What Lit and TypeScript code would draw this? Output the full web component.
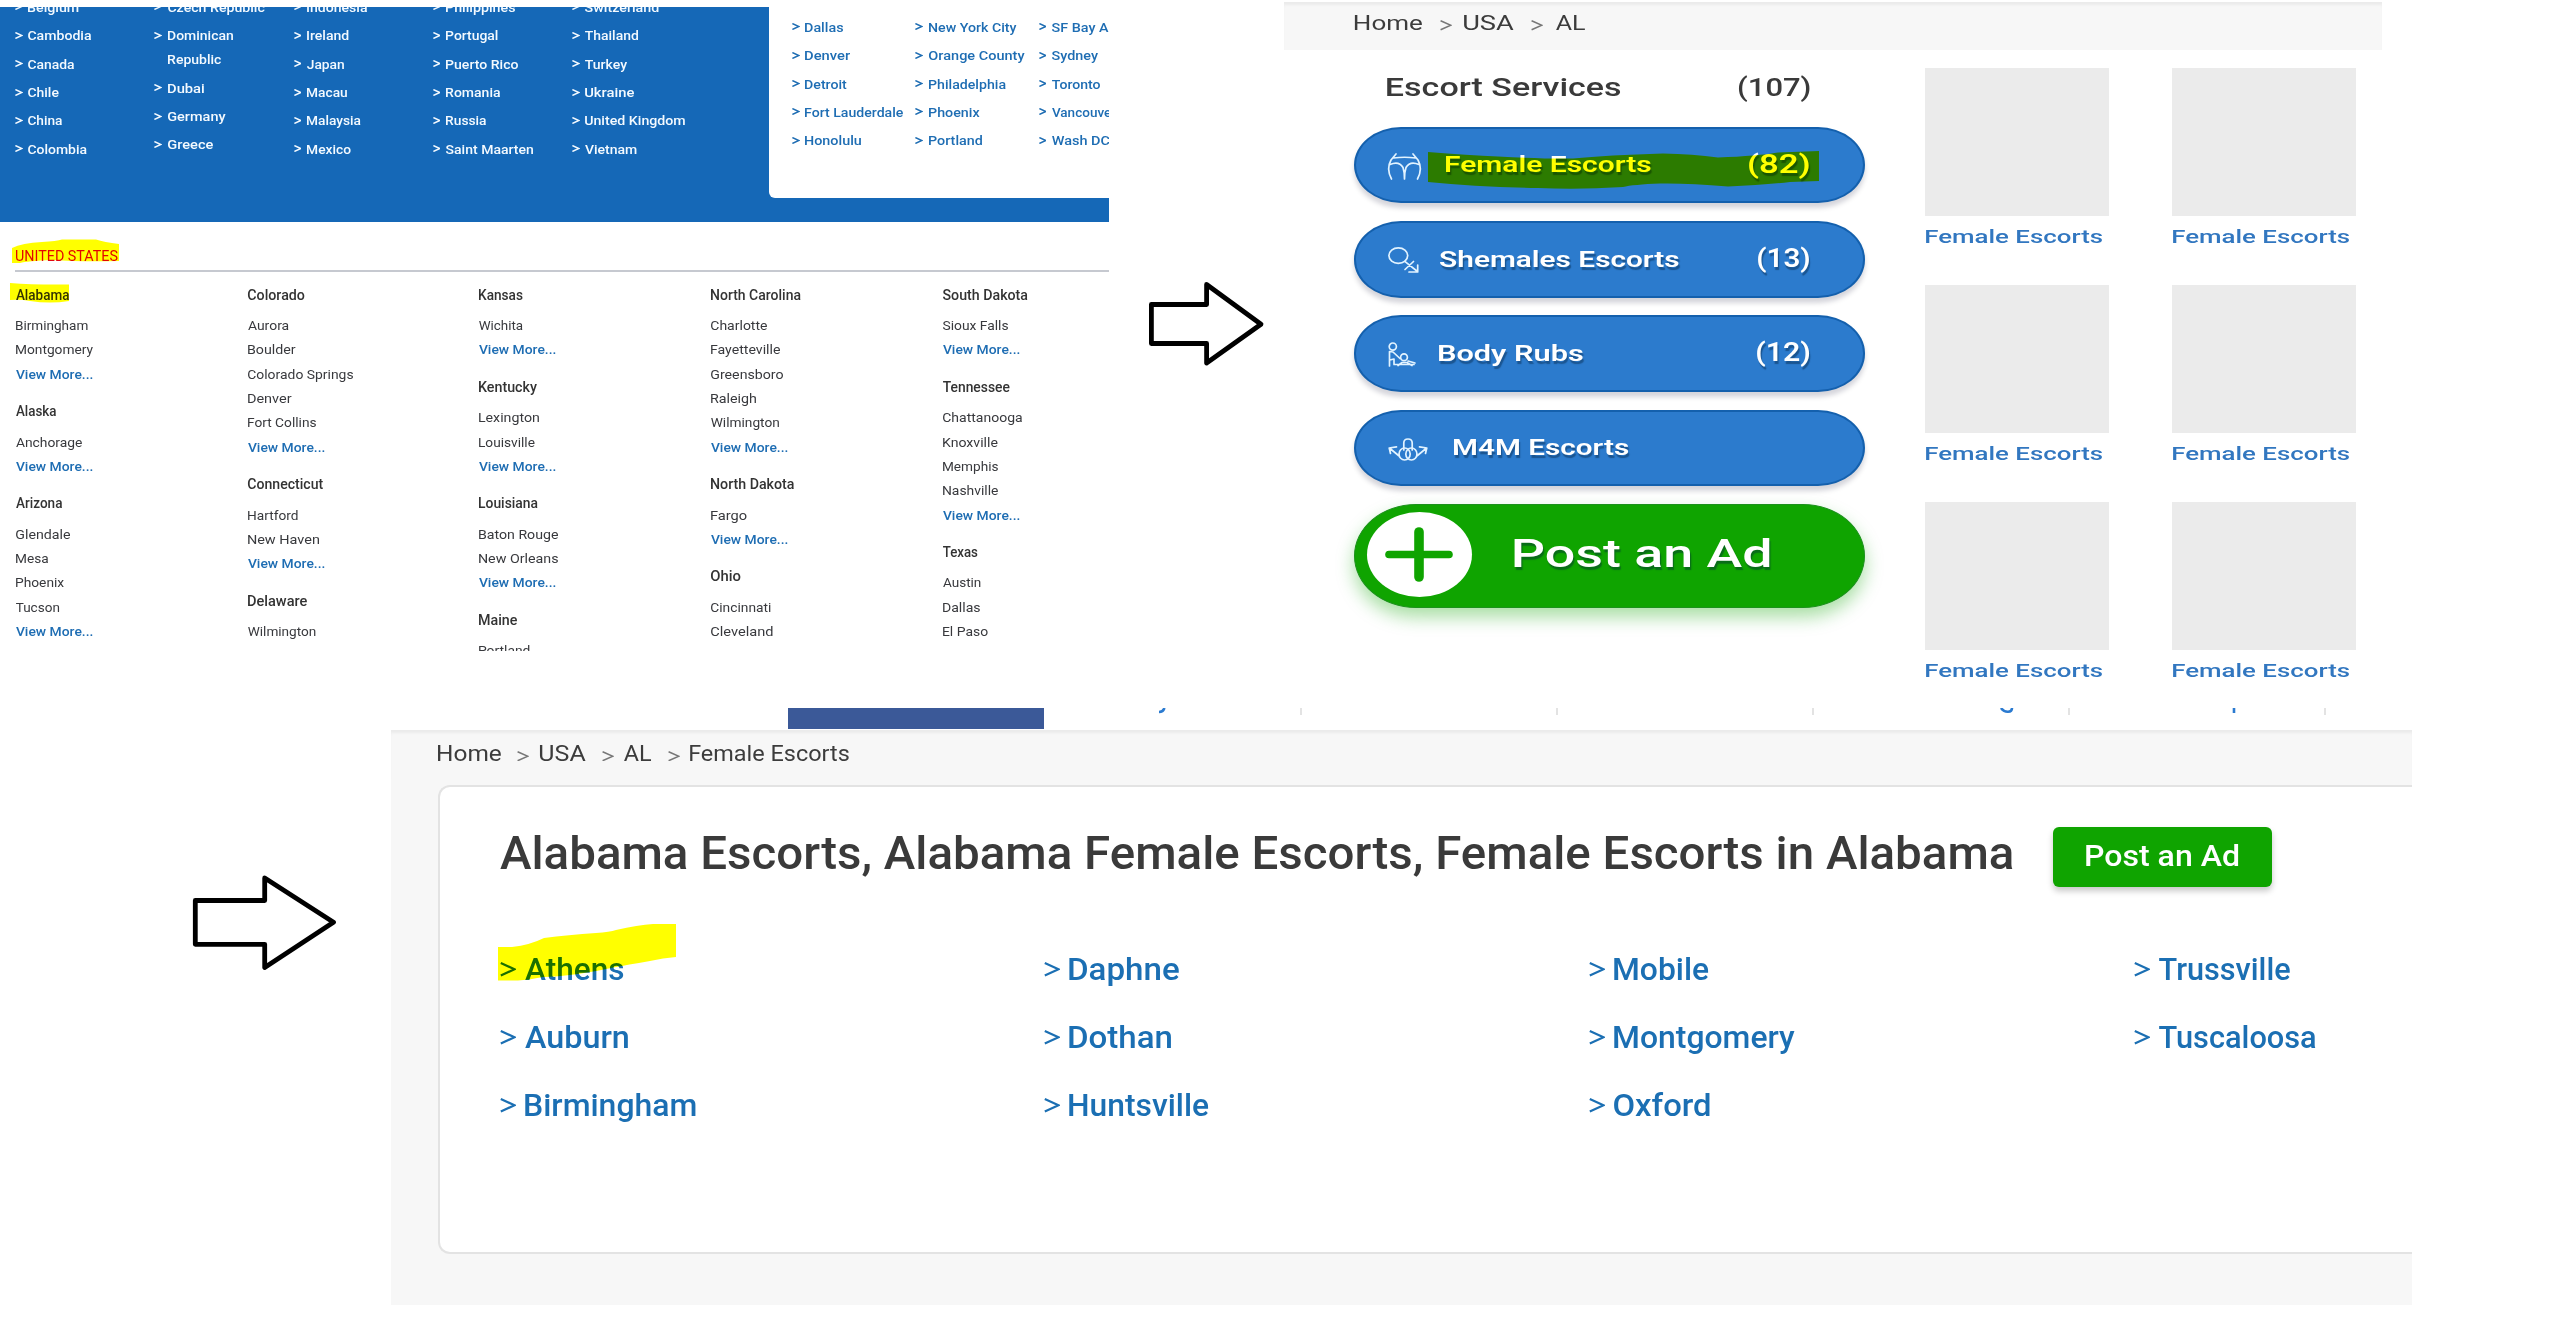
import { LitElement, html, css, svg, nothing } from "lit";
import { customElement, property, query } from "lit/decorators.js";
import { styleMap } from "lit/directives/style-map.js";

type Label = [text: string, width: number];

/** One run of text whose ink is stretched horizontally to a given width. */
@customElement("fit-text")
class FitText extends LitElement {
  @property() text = "";
  @property({ type: Number }) w = 0;
  @query("span") span!: HTMLSpanElement;

  static styles = css`
    :host { display: block; flex: none; white-space: nowrap; }
    span { display: inline-block; transform-origin: 0 50%; vertical-align: top; }
  `;

  updated() {
    // Measured at ten times the size, since glyph bounds come back rounded.
    const zoom = 10;
    const ctx = document.createElement("canvas").getContext("2d")!;
    const cs = getComputedStyle(this.span);
    ctx.font = `${cs.fontWeight} ${parseFloat(cs.fontSize) * zoom}px ${cs.fontFamily}`;
    const m = ctx.measureText(this.text);
    const left = m.actualBoundingBoxLeft / zoom;
    const scale = this.w / (left + m.actualBoundingBoxRight / zoom);
    this.style.width = `${this.w}px`;
    this.span.style.transform = `translateX(${left * scale}px) scaleX(${scale})`;
  }

  render() {
    return html`<span>${this.text}</span>`;
  }
}

const fit = ([text, width]: Label, cls = "") => html`<fit-text class=${cls} .text=${text} .w=${width}></fit-text>`;

const chevron = (cls: string) => html`
  <svg class="chev ${cls}" viewBox="0 0 16 14" preserveAspectRatio="none">
    <path d="M0.8 1 L14.5 7 L0.8 13" vector-effect="non-scaling-stroke" />
  </svg>`;

const countries: Label[][][] = [
  [[["Belgium", 50.5]], [["Cambodia", 63]], [["Canada", 46]], [["Chile", 30.5]], [["China", 34]], [["Colombia", 58.5]]],
  [[["Czech Republic", 96.5]], [["Dominican", 65], ["Republic", 53]], [["Dubai", 36]], [["Germany", 57.5]], [["Greece", 45]]],
  [[["Indonesia", 60]], [["Ireland", 41.5]], [["Japan", 37]], [["Macau", 40]], [["Malaysia", 53.5]], [["Mexico", 43.5]]],
  [[["Philippines", 69]], [["Portugal", 51.5]], [["Puerto Rico", 72]], [["Romania", 54]], [["Russia", 40]], [["Saint Maarten", 87]]],
  [[["Switzerland", 73.5]], [["Thailand", 53]], [["Turkey", 42]], [["Ukraine", 49]], [["United Kingdom", 100]], [["Vietnam", 51.5]]],
];

const topCities: Label[][][] = [
  [[["Dallas", 38]], [["Denver", 45]], [["Detroit", 41.5]], [["Fort Lauderdale", 98]], [["Honolulu", 56]]],
  [[["New York City", 87.5]], [["Orange County", 95.5]], [["Philadelphia", 76.5]], [["Phoenix", 50.5]], [["Portland", 53]]],
  [[["SF Bay A", 56.5]], [["Sydney", 46]], [["Toronto", 48]], [["Vancouver", 64]], [["Wash DC", 57.5]]],
];

interface Region { name: Label; cities: Label[]; more: boolean; }

const states: Region[][] = [
  [
    { name: ["Alabama", 53], cities: [["Birmingham", 71.5], ["Montgomery", 77]], more: true },
    { name: ["Alaska", 40], cities: [["Anchorage", 66]], more: true },
    { name: ["Arizona", 46], cities: [["Glendale", 54], ["Mesa", 32], ["Phoenix", 48], ["Tucson", 43]], more: true },
  ],
  [
    { name: ["Colorado", 56.5], cities: [["Aurora", 40.5], ["Boulder", 47.5], ["Colorado Springs", 105], ["Denver", 43.5], ["Fort Collins", 68]], more: true },
    { name: ["Connecticut", 75], cities: [["Hartford", 49.5], ["New Haven", 71]], more: true },
    { name: ["Delaware", 59], cities: [["Wilmington", 67.5]], more: true },
  ],
  [
    { name: ["Kansas", 43.5], cities: [["Wichita", 43.5]], more: true },
    { name: ["Kentucky", 58], cities: [["Lexington", 60], ["Louisville", 55.5]], more: true },
    { name: ["Louisiana", 58.5], cities: [["Baton Rouge", 79], ["New Orleans", 79]], more: true },
    { name: ["Maine", 38], cities: [["Portland", 50.5]], more: false },
  ],
  [
    { name: ["North Carolina", 89.5], cities: [["Charlotte", 56], ["Fayetteville", 69], ["Greensboro", 72], ["Raleigh", 45], ["Wilmington", 68]], more: true },
    { name: ["North Dakota", 83], cities: [["Fargo", 35.5]], more: true },
    { name: ["Ohio", 29.5], cities: [["Cincinnati", 59.5], ["Cleveland", 61.5]], more: false },
  ],
  [
    { name: ["South Dakota", 84.5], cities: [["Sioux Falls", 65]], more: true },
    { name: ["Tennessee", 66.5], cities: [["Chattanooga", 79], ["Knoxville", 54.5], ["Memphis", 55], ["Nashville", 55]], more: true },
    { name: ["Texas", 34.5], cities: [["Austin", 37.5], ["Dallas", 37], ["El Paso", 44.5]], more: false },
  ],
];

const iconFigure = svg`<path d="M8 1 L3 7 M25 1 L30 7 M5.5 5 Q16.5 3.5 27.5 5 M3 7 Q-2 16 3.5 26 M30 7 Q35 16 29.5 26 M2 11.5 Q11 7.5 15 14.5 Q16.5 19 16.5 26 Q16.5 19 18 14.5 Q22 7.5 31 11.5" />`;
const iconGenders = svg`<ellipse cx="10.3" cy="8.6" rx="9.4" ry="7.8" /><path d="M16.8 14.3 L29.5 24.5 M25.5 14.5 L17 22.5 M21 25 H29.7 V18" />`;
const iconMassage = svg`<circle cx="4.8" cy="3.6" r="3.6" /><path d="M1.5 23 V8.5 L5 9 L12 15.5 M1.8 17 L6 16 V21 M6 21.5 H26 M10 22.5 L14 19.5 L19 19.5 L24 22.5 M20 18 L27 20" /><circle cx="16" cy="14.2" r="3.4" />`;
const iconTrio = svg`<path d="M15.8 12 V5 Q15.8 1 20 1 Q24.2 1 24.2 5 V12" /><ellipse cx="16.6" cy="16" rx="5.6" ry="6" /><ellipse cx="23.4" cy="16" rx="5.6" ry="6" /><path d="M10.5 17.5 L2 10.5 M2.5 15.5 L1.2 10 L8.5 8.8 M29.5 17.5 L38 10.5 M37.5 15.5 L38.8 10 L31.5 8.8" />`;

const categories = [
  { label: ["Female Escorts", 204.5] as Label, count: ["(82)", 59.6] as Label, icon: iconFigure, iw: 33, ih: 27, slot: 57.6 },
  { label: ["Shemales Escorts", 238.5] as Label, count: ["(13)", 51] as Label, icon: iconGenders, iw: 31, ih: 26, slot: 52.2 },
  { label: ["Body Rubs", 143.5] as Label, count: ["(12)", 52] as Label, icon: iconMassage, iw: 28, ih: 24, slot: 51.3 },
  { label: ["M4M Escorts", 174] as Label, count: null, icon: iconTrio, iw: 40, ih: 23, slot: 65.8 },
];

const alabama: Label[] = [
  ["Athens", 98.5], ["Auburn", 103], ["Birmingham", 170.5],
  ["Daphne", 110], ["Dothan", 102], ["Huntsville", 139.5],
  ["Mobile", 94.5], ["Montgomery", 180.5], ["Oxford", 96],
  ["Trussville", 131], ["Tuscaloosa", 156.5],
];

@customElement("app-root")
class AppRoot extends LitElement {
  static styles = css`
    :host {
      display: block; width: 2564px; height: 1320px; overflow: hidden;
      background: #fff; font-family: Roboto, "Liberation Sans", sans-serif; color: #3a3a3a;
    }
    * { box-sizing: border-box; }
    svg { display: block; flex: none; fill: none; }
    .top { display: flex; align-items: flex-start; height: 707.5px; }
    .bottom { display: flex; align-items: flex-start; }
    .chev path { stroke: currentColor; }
    .mark { position: absolute; mix-blend-mode: multiply; fill: #ff0; }

    .arrow { stroke: #000; stroke-width: 4.8; stroke-linejoin: round; }
    .arrow.one { margin: 278px 0 0 39px; }
    .arrow.two { margin: 162px 0 0 192px; }

    /* directory */
    .directory { width: 1109px; height: 644px; margin-top: 7px; overflow: hidden; flex: none; }
    .blue { display: flex; height: 215px; background: #1568b7; color: #f4faff; }
    .countries { display: grid; grid-template-columns: repeat(5, 139.3px); width: 769px; padding-left: 15px; margin-top: -14.3px; font-size: 13.6px; font-weight: 500; flex: none; }
    .popular { display: grid; grid-template-columns: repeat(3, 123.4px); width: 340px; height: 191px; overflow: hidden; padding: 5.6px 0 0 23px; background: #fff; border-bottom-left-radius: 6px; color: #1e6db3; font-size: 13.6px; font-weight: 500; }
    .entry { display: flex; gap: 5.8px; padding: 2.2px 0; line-height: 24px; }
    .chev.small { width: 7.5px; height: 7px; margin-top: 8.5px; stroke-width: 1.4; }
    .us { position: relative; padding-left: 15px; }
    .us-title { padding: 22px 0 2px 1px; color: #e30613; font-size: 15px; line-height: 24px; }
    .mark.title { left: 12px; top: 16px; }
    .mark.alabama { left: 10px; top: 61px; }
    .rule { height: 2px; background: #c6c9d0; }
    .states { display: grid; grid-template-columns: repeat(5, 231.7px); padding: 10.8px 0 0 1px; line-height: 24.33px; font-size: 13.3px; color: #38393d; }
    .region { margin-bottom: 12.2px; }
    .region .name { margin-bottom: 7px; font-size: 14.2px; font-weight: 500; color: #333; }
    .more { color: #1e6db3; font-weight: 500; }

    /* categories */
    .category-page { width: 1098px; margin: 2px 0 0 18px; flex: none; }
    .crumbs { display: flex; align-items: center; background: #f7f7f7; color: #3c3c3c; box-shadow: inset 0 4px 3px -1px #ebebeb; }
    .crumbs .chev { width: 12px; height: 10.5px; margin: 4.6px 12.4px 0 18px; color: #777; stroke-width: 1.5; }
    .category-page .crumbs { height: 48px; padding: 0 0 5.8px 70.5px; font-size: 20.6px; }
    .category-body { display: flex; padding-left: 70px; }
    .side { width: 511px; display: flex; flex-direction: column; gap: 17.8px; }
    .side-head { display: flex; justify-content: space-between; align-items: center; height: 75.4px; padding: 0 55.4px 1px 33.4px; margin-bottom: -16.3px; font-size: 26.3px; font-weight: 500; }
    .pill { position: relative; display: flex; align-items: center; height: 76.5px; padding: 0 54px 0 32px; border: 2px solid #1460ad; border-radius: 47px / 38px; background: #2c7bcd; box-shadow: 0 5px 5px rgba(0, 0, 40, .17); color: #fff; font-size: 22.5px; font-weight: 600; }
    .pill fit-text, .post fit-text { text-shadow: 1px 2.5px 1px rgba(0, 30, 60, .42); }
    .pill fit-text { margin-bottom: 1.6px; }
    .pill .count { margin-left: auto; font-size: 25px; }
    .slot { padding-top: 2px; flex: none; }
    .slot svg { stroke: #e2f3ff; stroke-width: 1.7; stroke-linecap: round; stroke-linejoin: round; overflow: visible; }
    .mark.pill-mark { left: 72px; top: 21px; }
    .post { display: flex; align-items: center; height: 104.4px; padding-left: 12px; border: 1px solid #1c911c; border-radius: 62px / 52px; background: #0fa400; box-shadow: 0 9px 18px rgba(15, 164, 0, .36); color: #fff; font-size: 39.5px; font-weight: 500; }
    .disc { display: grid; place-items: center; width: 105px; height: 85px; margin: -3px 42.4px 0 0; border-radius: 50%; background: #fff; }
    .plus { stroke: #0fa400; stroke-linecap: round; margin-left: -1px; }
    .post fit-text { margin-top: -5px; }
    .gallery { display: grid; grid-template-columns: 184px 184px; grid-auto-rows: 216.9px; column-gap: 63px; margin: 18px 0 0 60px; color: #3277c0; font-size: 19px; font-weight: 500; line-height: 42px; }
    .tile { height: 148px; background: #ebebeb; }
    .gallery fit-text { margin-left: 1.2px; }

    /* city page */
    .city-page { width: 2021px; margin-left: 51px; flex: none; background: #f7f7f7; height: 597.5px; }
    .tabs { display: flex; height: 22px; background: #fff; padding-left: 397px; overflow: hidden; }
    .tab { width: 256px; height: 7px; border-right: 2px solid #e3e3e3; flex: none; }
    .tab.active { height: 21px; background: #3b5998; border: 0; margin-right: 2px; }
    .tab svg { stroke: #2a7ad0; stroke-width: 2.6; }
    .city-page .crumbs { height: 49px; padding: 0 0 1px 46.7px; font-size: 21.5px; }
    .city-page .crumbs .chev { margin: 4.6px 10.5px 0 16.6px; }
    .card { height: 468.5px; margin: 6.7px 0 0 46.6px; padding: 40px 0 0 60px; border: 2px solid #e3e3e3; border-right: 0; border-radius: 12px 0 0 12px; background: #fff; }
    .card-head { display: flex; align-items: center; height: 60px; gap: 41px; }
    .card-head .heading { margin-top: -7.6px; font-size: 46px; font-weight: 500; }
    .button { display: grid; place-items: center; width: 219px; height: 60px; padding-bottom: 3px; border-radius: 6px; background: #0fa400; box-shadow: 0 4px 6px rgba(0, 0, 0, .22); color: #fff; font-size: 29px; font-weight: 500; }
    .cities { position: relative; display: grid; grid-auto-flow: column; grid-template-rows: repeat(3, 68px); grid-template-columns: repeat(3, 544.7px) auto; margin-top: 48.2px; color: #1b6fb3; font-size: 30.5px; font-weight: 500; }
    .city { display: flex; align-items: center; gap: 9px; }
    .city .chev { width: 16px; height: 14.5px; stroke-width: 2.2; }
    .mark.athens { left: -2px; top: -12px; }
  `;

  entry(lines: Label[]) {
    return html`<div class="entry">${chevron("small")}<div>${lines.map((l) => fit(l))}</div></div>`;
  }

  crumbs(items: Label[]) {
    return html`<div class="crumbs">${items.map((l, i) => html`${i ? chevron("") : nothing}${fit(l)}`)}</div>`;
  }

  directory() {
    return html`<section class="directory">
      <div class="blue">
        <div class="countries">${countries.map((c) => html`<div>${c.map((e) => this.entry(e))}</div>`)}</div>
        <div class="popular">${topCities.map((c) => html`<div>${c.map((e) => this.entry(e))}</div>`)}</div>
      </div>
      <div class="us">
        <div class="us-title">${fit(["UNITED STATES", 101.5])}</div>
        <div class="rule"></div>
        <div class="states">
          ${states.map((col) => html`<div>${col.map((r) => html`<div class="region">
            ${fit(r.name, "name")}
            ${r.cities.map((c) => fit(c))}
            ${r.more ? fit(["View More...", 76.5], "more") : nothing}
          </div>`)}</div>`)}
        </div>
        <svg class="mark title" width="108" height="26" viewBox="0 0 108 26"><path d="M0 10 Q10 5 30 4 Q45 3 50 1.5 H84 Q92 4 107 6 V23 Q70 24 40 22 Q15 23 8 25 H0 Z" /></svg>
        <svg class="mark alabama" width="60" height="21" viewBox="0 0 60 21"><path d="M0 0 Q25 2 59 1.5 V18 Q40 21 20 18 Q10 16 0 17 Z" /></svg>
      </div>
    </section>`;
  }

  categoryPage() {
    return html`<section class="category-page">
      ${this.crumbs([["Home", 67], ["USA", 49.5], ["AL", 29]])}
      <div class="category-body">
        <div class="side">
          <div class="side-head">${fit(["Escort Services", 233.6])}${fit(["(107)", 70.8])}</div>
          ${categories.map((c, i) => html`<div class="pill">
            <div class="slot" style=${styleMap({ width: `${c.slot}px` })}>
              <svg width=${c.iw} height=${c.ih} viewBox="0 0 ${c.iw} ${c.ih}">${c.icon}</svg>
            </div>
            ${fit(c.label)}
            ${c.count ? fit(c.count, "count") : nothing}
            ${i === 0 ? html`<svg class="mark pill-mark" width="391" height="40" viewBox="0 0 391 40">
              <path d="M0 2 Q40 5 70 6.5 Q115 9 145 8.5 Q180 5 235 3.5 Q265 4 290 7.5 Q330 6 350 2.5 L391 1 V31 L362 32 Q335 35 300 36.5 Q260 33 232 33.5 Q205 34.5 195 37 Q150 40 110 38 Q50 37 0 32 Z" /></svg>` : nothing}
          </div>`)}
          <div class="post">
            <div class="disc"><svg class="plus" width="68" height="55" viewBox="0 0 68 55">
              <path stroke-width="7.6" d="M4 27.5 H64" /><path stroke-width="9.6" d="M34 5 V50" /></svg></div>
            ${fit(["Post an Ad", 256])}
          </div>
        </div>
        <div class="gallery">
          ${[0, 1, 2, 3, 4, 5].map(() => html`<div><div class="tile"></div>${fit(["Female Escorts", 176])}</div>`)}
        </div>
      </div>
    </section>`;
  }

  cityPage() {
    return html`<section class="city-page">
      <div class="tabs">
        <div class="tab active"></div>
        <div class="tab"><svg width="254" height="7"><path d="M118.5 0 Q117 4 113 4" /></svg></div>
        <div class="tab"></div>
        <div class="tab"></div>
        <div class="tab"><svg width="254" height="7"><path d="M187 0 Q190 4 194 3.8 Q198 3.5 198 0" /></svg></div>
        <div class="tab"><svg width="254" height="7"><path d="M164 0 V5" /></svg></div>
      </div>
      ${this.crumbs([["Home", 63], ["USA", 45.5], ["AL", 27], ["Female Escorts", 158.7]])}
      <div class="card">
        <div class="card-head">
          ${fit(["Alabama Escorts, Alabama Female Escorts, Female Escorts in Alabama", 1512.5], "heading")}
          <div class="button">${fit(["Post an Ad", 152.5])}</div>
        </div>
        <div class="cities">
          ${alabama.map((c) => html`<div class="city">${chevron("")}${fit(c)}</div>`)}
          <svg class="mark athens" width="179" height="58" viewBox="0 0 179 58"><path d="M0 24 H14 Q32 22 46 15 Q70 12 98 10 Q112 9 118 7 Q140 2 155 1 H178 V34 Q165 35 152 38 Q128 42 118 44 Q100 48 80 51 Q58 54 45 54 Q30 57 20 57.5 H0 Z" /></svg>
        </div>
      </div>
    </section>`;
  }

  render() {
    return html`
      <div class="top">
        ${this.directory()}
        <svg class="arrow one" width="118" height="92" viewBox="1148 278 118 92"><path d="M1151.4 304.5 H1206.6 V284.5 L1261 324.3 L1206.6 363 V343.5 H1151.4 Z" /></svg>
        ${this.categoryPage()}
      </div>
      <div class="bottom">
        <svg class="arrow two" width="148" height="105" viewBox="192 870 148 105"><path d="M195.3 900.5 H264.7 V878 L333.5 922.3 L264.7 967.5 V944.3 H195.3 Z" /></svg>
        ${this.cityPage()}
      </div>`;
  }
}
